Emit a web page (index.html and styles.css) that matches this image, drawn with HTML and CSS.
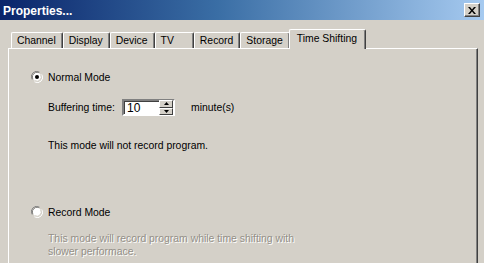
FILE: index.html
```html
<!DOCTYPE html>
<html>
<head>
<meta charset="utf-8">
<link rel="stylesheet" href="styles.css">
</head>
<body>
<div class="window">
  <div class="titlebar">
    <span class="title">Properties...</span>
    <span class="close">
      <svg width="8" height="7" viewBox="0 0 8 7"><path d="M0 0h2l2 2.5L6 0h2L5 3.5 8 7H6L4 4.5 2 7H0l3-3.5z" fill="#000"/></svg>
    </span>
  </div>
  <div class="tabs">
    <div class="tab">Channel</div>
    <div class="tab">Display</div>
    <div class="tab">Device</div>
    <div class="tab tab-wide">TV</div>
    <div class="tab">Record</div>
    <div class="tab">Storage</div>
    <div class="tab active">Time Shifting</div>
  </div>
  <div class="panel">
    <div class="radio-row">
      <svg class="radio" width="12" height="12" viewBox="0 0 12 12">
        <path d="M1.2 8.5A5.3 5.3 0 0 1 8.5 1.2" fill="none" stroke="#808080"/>
        <path d="M2.3 8A4.2 4.2 0 0 1 8 2.3" fill="none" stroke="#404040"/>
        <circle cx="6" cy="6" r="4.2" fill="#fff"/>
        <path d="M10.8 3.5A5.3 5.3 0 0 1 3.5 10.8" fill="none" stroke="#fff"/>
        <path d="M9.7 4A4.2 4.2 0 0 1 4 9.7" fill="none" stroke="#d4d0c8"/>
        <circle cx="6" cy="6" r="2" fill="#000"/>
      </svg>
      <span>Normal Mode</span>
    </div>
    <div class="field-row">
      <span class="label">Buffering time:</span>
      <div class="spin">
        <span class="spin-value">10</span>
        <div class="spin-btns">
          <div class="spin-btn"><svg width="5" height="3" viewBox="0 0 5 3"><path d="M2.5 0L5 3H0z" fill="#000"/></svg></div>
          <div class="spin-btn"><svg width="5" height="3" viewBox="0 0 5 3"><path d="M0 0h5L2.5 3z" fill="#000"/></svg></div>
        </div>
      </div>
      <span class="unit">minute(s)</span>
    </div>
    <p class="note">This mode will not record program.</p>
    <div class="radio-row second">
      <svg class="radio" width="12" height="12" viewBox="0 0 12 12">
        <path d="M1.2 8.5A5.3 5.3 0 0 1 8.5 1.2" fill="none" stroke="#808080"/>
        <path d="M2.3 8A4.2 4.2 0 0 1 8 2.3" fill="none" stroke="#404040"/>
        <circle cx="6" cy="6" r="4.2" fill="#fff"/>
        <path d="M10.8 3.5A5.3 5.3 0 0 1 3.5 10.8" fill="none" stroke="#fff"/>
        <path d="M9.7 4A4.2 4.2 0 0 1 4 9.7" fill="none" stroke="#d4d0c8"/>
      </svg>
      <span>Record Mode</span>
    </div>
    <p class="note disabled">This mode will record program while time shifting with<br>slower performace.</p>
  </div>
</div>
</body>
</html>
```
FILE: styles.css
```css
html, body {
  margin: 0;
  padding: 0;
  background: #d4d0c8;
}
body {
  font-family: "Liberation Sans", Arial, sans-serif;
  font-size: 10.4px;
  color: #000;
  width: 484px;
  height: 263px;
  overflow: hidden;
}
.window {
  display: flex;
  flex-direction: column;
  height: 263px;
}
.titlebar {
  height: 20px;
  flex: none;
  background: linear-gradient(to right, #0a246a 0%, #3a6ea5 45%, #a6caf0 100%);
  display: flex;
  align-items: center;
  justify-content: space-between;
  padding: 0 4px 0 3px;
}
.title {
  color: #fff;
  font-weight: bold;
  font-size: 12px;
  padding-top: 1px;
}
.close {
  width: 14px;
  height: 12px;
  background: #d4d0c8;
  border: 1px solid;
  border-color: #fff #404040 #404040 #fff;
  box-shadow: inset -1px -1px 0 #808080;
  display: flex;
  align-items: center;
  justify-content: center;
}
.tabs {
  display: flex;
  align-items: flex-end;
  padding-left: 11px;
  margin-top: 8px;
  height: 20px;
  flex: none;
  position: relative;
  z-index: 1;
}
.tab {
  height: 15px;
  line-height: 16px;
  padding: 0 6px 0 5px;
  border-top: 1px solid #fff;
  border-left: 1px solid #fff;
  border-right: 1px solid #404040;
  box-shadow: inset -1px 0 0 #808080;
  border-radius: 2px 2px 0 0;
  white-space: nowrap;
}
.tab-wide {
  padding-right: 19px;
}
.active {
  height: 19px;
  line-height: 17px;
  padding: 0 8px 0 7px;
  margin-bottom: -1px;
  margin-left: -1px;
  background: #d4d0c8;
}
.panel {
  flex: 1;
  margin: 0 6px 0 8px;
  border-top: 1px solid #fff;
  border-left: 1px solid #fff;
  border-right: 1px solid #404040;
  box-shadow: inset -1px 0 0 #808080;
  padding: 21px 0 0 22px;
}
.radio-row {
  display: flex;
  align-items: center;
  gap: 5px;
  height: 14px;
}
.radio {
  flex: none;
}
.field-row {
  display: flex;
  align-items: center;
  margin-top: 15px;
  padding-left: 17px;
  height: 17px;
}
.label {
  width: 74px;
}
.spin {
  width: 49px;
  height: 13px;
  background: #fff;
  border: 2px solid;
  border-color: #808080 #fff #fff #808080;
  box-shadow: inset 1px 1px 0 #404040;
  display: flex;
  justify-content: space-between;
  align-items: center;
}
.spin-value {
  padding-left: 3px;
  font-size: 12px;
}
.spin-btns {
  display: flex;
  flex-direction: column;
  width: 14px;
  height: 15px;
}
.spin-btn {
  flex: 1;
  background: #d4d0c8;
  border: 1px solid;
  border-color: #fff #404040 #404040 #fff;
  display: flex;
  align-items: center;
  justify-content: center;
}
.unit {
  margin-left: 16px;
}
.note {
  margin: 23px 0 0 17px;
  line-height: 13px;
}
.second {
  margin-top: 53px;
}
.disabled {
  margin-top: 13px;
  color: #938f87;
  text-shadow: 1px 1px 0 #fff;
  line-height: 13px;
}
```
